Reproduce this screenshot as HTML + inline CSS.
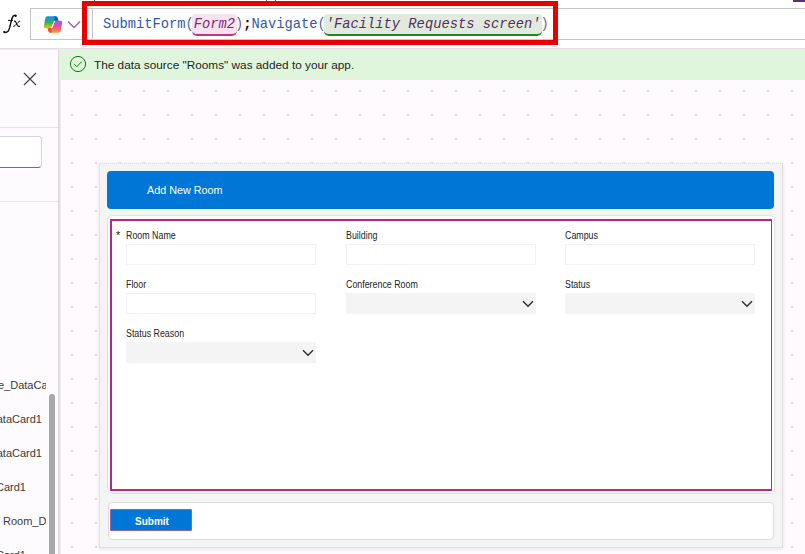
<!DOCTYPE html>
<html><head><meta charset="utf-8">
<style>
*{box-sizing:border-box;margin:0;padding:0}
html,body{width:805px;height:554px;overflow:hidden;background:#fff;font-family:"Liberation Sans",sans-serif;position:relative}
.abs{position:absolute}
.mono{font-family:"Liberation Mono",monospace}
.lbl{position:absolute;font-size:10px;color:#242424;white-space:nowrap;line-height:10px;transform:scaleX(0.885);transform-origin:0 0}
.inp{position:absolute;width:190px;height:21px;border:1px solid #f2f2f2;background:#fff}
.dd{position:absolute;width:190px;height:21px;background:#f4f4f4}
.dd svg{position:absolute;left:176px;top:7px}
.tree{position:absolute;font-size:11px;color:#3b3a39;white-space:nowrap;line-height:13px}
</style></head><body>

<!-- top strip -->
<div class="abs" style="left:94px;top:0;width:1px;height:1px;background:#666"></div>
<div class="abs" style="left:266px;top:0;width:1px;height:1px;background:#666"></div>
<div class="abs" style="left:275px;top:0;width:1px;height:1px;background:#666"></div>
<div class="abs" style="left:793px;top:0;width:12px;height:2px;background:#5c2e6e"></div>

<!-- fx -->
<svg class="abs" style="left:0;top:12px" width="24" height="24" viewBox="0 0 24 24">
<path d="M16.2 3.9 C15.3 2.9 13.4 3.1 12.4 5.4 C11.4 7.8 10.4 13 9.4 16.4 C8.5 19.6 7 21 4.4 20.4" fill="none" stroke="#111" stroke-width="1.45"/>
<circle cx="15.6" cy="3.9" r="1.15" fill="#111"/>
<circle cx="4.3" cy="20.1" r="1.15" fill="#111"/>
<path d="M8 8.4 H12.9" stroke="#111" stroke-width="1"/>
<path d="M14 9.3 C15.2 8.9 15.8 9.8 16.3 11 L17.3 13.3 C17.8 14.3 18.6 14.6 19.9 14.1" fill="none" stroke="#111" stroke-width="1.25"/>
<path d="M20.2 8.9 C19.3 9.1 18.4 9.9 16.9 11.6 L15 13.6 C14.5 14.2 14 14.4 13.1 14.3" fill="none" stroke="#111" stroke-width="1"/>
</svg>

<!-- formula bar box -->
<div class="abs" style="left:30px;top:8px;width:790px;height:32px;border:1px solid #c8c6c4;border-right:none"></div>
<div class="abs" style="left:92px;top:9px;width:1px;height:30px;background:#c8c6c4"></div>

<!-- copilot icon -->
<svg class="abs" style="left:42px;top:14px" width="22" height="22" viewBox="0 0 22 22">
<defs>
<linearGradient id="g1" x1="0" y1="0" x2="0" y2="1"><stop offset="0" stop-color="#1491f2"/><stop offset="0.5" stop-color="#2fae62"/><stop offset="1" stop-color="#f4c20d"/></linearGradient>
<linearGradient id="g2" x1="0" y1="0" x2="0" y2="1"><stop offset="0" stop-color="#a653ea"/><stop offset="0.5" stop-color="#ef4f8c"/><stop offset="1" stop-color="#fd9a3e"/></linearGradient>
<linearGradient id="g3" x1="0" y1="0" x2="1" y2="0"><stop offset="0" stop-color="#1491f2" stop-opacity="0"/><stop offset="0.5" stop-color="#0d4fd4"/><stop offset="1" stop-color="#0d4fd4"/></linearGradient>
<linearGradient id="g4" x1="1" y1="0" x2="0" y2="0"><stop offset="0" stop-color="#fd9a3e" stop-opacity="0"/><stop offset="0.5" stop-color="#ee4a24"/><stop offset="1" stop-color="#ee4a24"/></linearGradient>
</defs>
<path d="M5.2 2.2 L13.4 2.2 Q15 2.2 15.6 4 L16.4 6.8 L12.6 6.8 Q12 6.8 11.7 7.6 L9.1 14.3 L3.3 14.3 Q1.6 14.3 1.9 12.4 L3 5.2 Q3.5 2.2 5.2 2.2 Z" fill="url(#g1)"/>
<path d="M10.5 2.2 L13.4 2.2 Q15 2.2 15.6 4 L16.4 6.8 L12.2 6.8 Z" fill="url(#g3)"/>
<path d="M16.8 18.8 L8.6 18.8 Q7 18.8 6.4 17 L5.6 14.3 L9.6 14.3 Q10.2 14.3 10.5 13.5 L13.3 6.8 L18.7 6.8 Q20.4 6.8 20.1 8.6 L19 15.8 Q18.5 18.8 16.8 18.8 Z" fill="url(#g2)"/>
<path d="M11.5 18.8 L8.6 18.8 Q7 18.8 6.4 17 L5.6 14.3 L9.9 14.3 Z" fill="url(#g4)"/>
</svg>
<svg class="abs" style="left:67px;top:20px" width="14" height="9" viewBox="0 0 14 9"><path d="M1 1.5 L7 7.5 L13 1.5" fill="none" stroke="#a35bb5" stroke-width="1.4"/></svg>

<!-- formula pills -->
<div class="abs" style="left:192px;top:14px;width:45px;height:22px;background:#f6e3ef;border-bottom:2px solid #b8397f;border-radius:3px 3px 5px 5px"></div>
<div class="abs" style="left:324px;top:14px;width:218px;height:22px;background:#e2eadf;border-bottom:2px solid #1c8a1c;border-radius:3px 3px 5px 5px"></div>

<!-- formula text -->
<div class="abs mono" style="left:103px;top:17px;font-size:13.75px;line-height:16px;white-space:pre;color:#242424"><span style="color:#2f5aa8">SubmitForm</span><span style="color:#4a6aa8">(</span><span style="color:#7d2a78;font-style:italic">Form2</span><span style="color:#7a5a8a">)</span><span style="color:#000;font-weight:bold">;</span><span style="color:#2f5aa8">Navigate</span><span style="color:#4a6aa8">(</span><span style="color:#52305a;font-style:italic">'Facility Requests screen'</span><span style="color:#7a5a8a">)</span></div>

<!-- red annotation box -->
<div class="abs" style="left:82px;top:1px;width:476px;height:44px;border:5px solid #e60000"></div>

<!-- divider under header -->
<div class="abs" style="left:0;top:48px;width:805px;height:1px;background:#e3dfe3"></div>
<div class="abs" style="left:0;top:49px;width:58px;height:1px;background:#efebef"></div>

<!-- left panel -->
<div class="abs" style="left:0;top:50px;width:58px;height:504px;background:#fefbfe"></div>
<div class="abs" style="left:58px;top:49px;width:1px;height:505px;background:#dcd9dc"></div>
<svg class="abs" style="left:23px;top:72px" width="14" height="14" viewBox="0 0 14 14"><path d="M1 1 L13 13 M13 1 L1 13" stroke="#424242" stroke-width="1.2"/></svg>
<div class="abs" style="left:0;top:127px;width:58px;height:1px;background:#e8e3e8"></div>
<div class="abs" style="left:-10px;top:136px;width:52px;height:32px;background:#fff;border:1px solid #d6d6d6;border-bottom:1px solid #707070;border-radius:4px"></div>
<div class="abs" style="left:0;top:201px;width:58px;height:1px;background:#e8e3e8"></div>

<div class="abs" style="left:0;top:360px;width:46px;height:194px;overflow:hidden">
  <div class="tree" style="left:-2px;top:19px">e_DataCard1</div>
  <div class="tree" style="right:4px;top:53px">DataCard1</div>
  <div class="tree" style="right:4px;top:87px">DataCard1</div>
  <div class="tree" style="right:20px;top:121px">Card1</div>
  <div class="tree" style="left:3px;top:155px">Room_DataCard1</div>
  <div class="tree" style="right:20px;top:189px">Card1</div>
</div>
<div class="abs" style="left:49px;top:394px;width:6px;height:170px;background:#a8a8a8;border-radius:3px"></div>

<!-- notification -->
<div class="abs" style="left:59px;top:49px;width:746px;height:31px;background:#dff6dd"></div>
<svg class="abs" style="left:69px;top:55px" width="18" height="18" viewBox="0 0 18 18"><circle cx="9" cy="9" r="7.6" fill="none" stroke="#107c10" stroke-width="1"/><path d="M5.3 9.2 L7.8 11.7 L12.7 6.6" fill="none" stroke="#107c10" stroke-width="1"/></svg>
<div class="abs" style="left:94px;top:58px;font-size:11.8px;line-height:14px;color:#242424;white-space:nowrap">The data source "Rooms" was added to your app.</div>

<!-- canvas -->
<div class="abs" style="left:59px;top:80px;width:746px;height:474px;background-color:#fefafe;background-image:radial-gradient(circle at 1px 1px,#e0dce0 0.9px,transparent 1.2px);background-size:24px 24px;background-position:12px 10px"></div>
<div class="abs" style="left:59px;top:80px;width:2px;height:474px;background:linear-gradient(90deg,#dedbde,#f6f3f6)"></div>

<!-- form container -->
<div class="abs" style="left:99px;top:163px;width:684px;height:385px;background:#f4f4f4;border:1px solid #e2e2e2;border-top:1px dotted #e2dcd6;border-right:1px solid #e0e0e0;box-shadow:0 1px 4px rgba(0,0,0,0.10)"></div>

<!-- header -->
<div class="abs" style="left:107px;top:171px;width:667px;height:38px;background:#0077d6;border-radius:4px"></div>
<div class="abs" style="left:147px;top:184px;font-size:10.8px;line-height:12px;color:#fff;white-space:nowrap">Add New Room</div>

<!-- form panel -->
<div class="abs" style="left:108px;top:216px;width:666px;height:277px;background:#fff;border-radius:4px;box-shadow:0 0 0 1px #e2e2e2"></div>
<div class="abs" style="left:110px;top:219px;width:662px;height:272px;border:2px solid #b12c80;border-right-width:1.6px"></div>

<!-- fields -->
<div class="lbl" style="left:116px;top:230px;font-size:11px;transform:none">*</div>
<div class="lbl" style="left:126px;top:231px">Room Name</div>
<div class="inp" style="left:126px;top:244px"></div>
<div class="lbl" style="left:346px;top:231px">Building</div>
<div class="inp" style="left:346px;top:244px"></div>
<div class="lbl" style="left:565px;top:231px">Campus</div>
<div class="inp" style="left:565px;top:244px"></div>

<div class="lbl" style="left:126px;top:280px">Floor</div>
<div class="inp" style="left:126px;top:293px"></div>
<div class="lbl" style="left:346px;top:280px">Conference Room</div>
<div class="dd" style="left:346px;top:293px"><svg width="12" height="8" viewBox="0 0 12 8"><path d="M1 1.2 L6 6.2 L11 1.2" fill="none" stroke="#303030" stroke-width="1.5"/></svg></div>
<div class="lbl" style="left:565px;top:280px">Status</div>
<div class="dd" style="left:565px;top:293px"><svg width="12" height="8" viewBox="0 0 12 8"><path d="M1 1.2 L6 6.2 L11 1.2" fill="none" stroke="#303030" stroke-width="1.5"/></svg></div>

<div class="lbl" style="left:126px;top:329px">Status Reason</div>
<div class="dd" style="left:126px;top:342px"><svg width="12" height="8" viewBox="0 0 12 8"><path d="M1 1.2 L6 6.2 L11 1.2" fill="none" stroke="#303030" stroke-width="1.5"/></svg></div>

<!-- submit panel -->
<div class="abs" style="left:108px;top:502px;width:666px;height:38px;background:#fff;border:1px solid #dedade;border-radius:4px"></div>
<div class="abs" style="left:110px;top:509px;width:82px;height:22px;background:#0077d6;border:1.5px solid #9062aa;border-radius:1px"></div>
<div class="abs" style="left:135px;top:516px;font-size:10px;font-weight:bold;line-height:12px;color:#fff;white-space:nowrap">Submit</div>

</body></html>
